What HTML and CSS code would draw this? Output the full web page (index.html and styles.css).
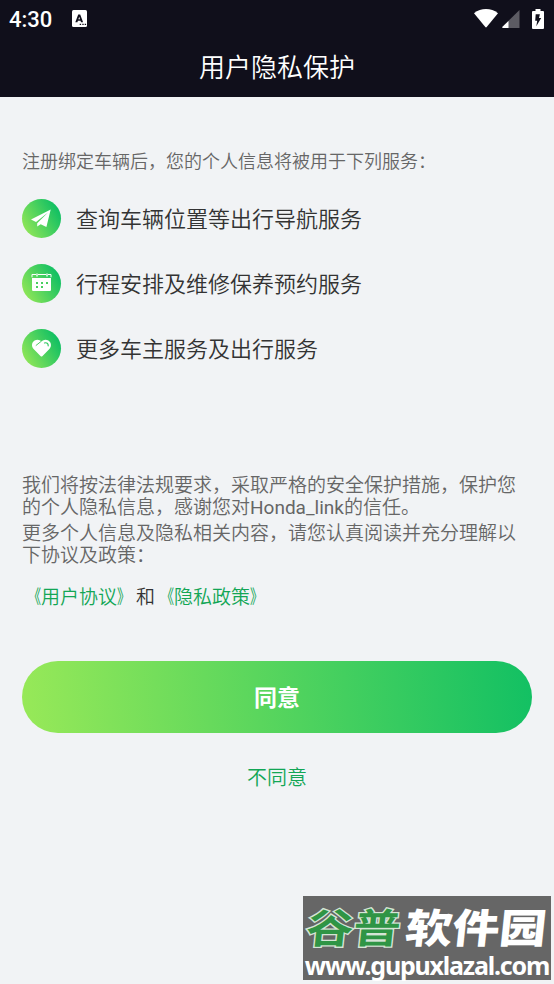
FILE: index.html
```html
<!DOCTYPE html>
<html lang="zh-CN">
<head>
    <meta charset="UTF-8">
    <meta name="viewport" content="width=device-width, initial-scale=1.0">
    <title>用户隐私保护</title>
    <link rel="stylesheet" href="styles.css">
</head>
<body>
    <header class="header">
        <div class="status-bar">
            <span class="time">4:30</span>
            <svg class="app-icon" width="15" height="17" viewBox="0 0 15 17">
                <rect width="15" height="17" rx="1.5" fill="#fff"/>
                <path d="M3.300 12.200 6.200 4.500h2L11.100 12.200H9L8.500 10.800H5.900L5.400 12.200ZM6.400 9.200H8L7.200 6.700Z" fill="#100f1b" fill-rule="evenodd"/>
                <path d="M7.700 14.300h1.400M10.300 14.300h1.400M12.700 14.300h1.400" stroke="#100f1b" stroke-width="1.300"/>
            </svg>
            <div class="status-icons">
                <svg width="24" height="19" viewBox="0 0 24 19">
                    <path d="M0 4.200C7-1.400 17-1.400 24 4.200L12.700 18q-.700.800-1.400 0Z" fill="#fff"/>
                </svg>
                <svg class="signal" width="18" height="18" viewBox="0 0 18 18">
                    <path d="M17.500 0v18H1q-1.200-.600-.500-1.300Z" fill="#5c5b63"/>
                    <path d="M6.500 11v7H1q-1.200-.600-.500-1.300Z" fill="#fff"/>
                </svg>
                <svg class="battery" width="12" height="20" viewBox="0 0 12 20">
                    <path d="M3.500 0h5v2H11q1 0 1 1v16q0 1-1 1H1q-1 0-1-1V3q0-1 1-1h2.500Z" fill="#fff"/>
                    <path d="M3.700 5.300h4.200L7 9.100h2.200L4.300 17.300 5.200 11.700H3.200Z" fill="#100f1b"/>
                </svg>
            </div>
        </div>
        <h1>用户隐私保护</h1>
    </header>

    <main class="content">
        <p class="intro">注册绑定车辆后，您的个人信息将被用于下列服务：</p>

        <ul class="services">
            <li>
                <span class="icon">
                    <svg width="39" height="39" viewBox="0 0 39 39">
                        <path d="M28.700 10.600 9 20.400l5 2.600L26 13.500 15.200 24.200v3.200l3.500-2.200 5.700 2.800Z" fill="#fff"/>
                    </svg>
                </span>
                <span class="label">查询车辆位置等出行导航服务</span>
            </li>
            <li>
                <span class="icon">
                    <svg width="39" height="39" viewBox="0 0 39 39">
                        <path d="M10 13.300v-2.800h4M16 10.500h8M26 10.500h3v2.800" fill="none" stroke="#fff" stroke-width="1"/>
                        <path d="M15 9.500v3M25 9.500v3" stroke="#fff" stroke-width="1.300"/>
                        <path d="M10 14h19v11.700q0 1.300-1.300 1.300H11.300Q10 27 10 25.700Z" fill="#fff"/>
                        <path d="M14 18h2v2h-2zM19 18h2v2h-2zM24 18h2v2h-2zM14 22h2v2h-2zM19 22h2v2h-2z" fill="#48cf5f"/>
                    </svg>
                </span>
                <span class="label">行程安排及维修保养预约服务</span>
            </li>
            <li>
                <span class="icon">
                    <svg width="39" height="39" viewBox="0 0 39 39">
                        <path d="M19.500 12.300Q22 10.200 25 11c4.200 1.200 5.200 6 2.400 9L20.300 27.200q-.800.700-1.600 0L11.600 20C8.800 17 9.800 12.200 14 11q3-.800 5.500 1.300Z" fill="#fff"/>
                        <path d="M13.800 16.600 19.600 12" stroke="#4bcf5f" stroke-width="1" fill="none"/>
                        <path d="M22.500 14c2.200-.800 3.800.600 3.700 2.800" stroke="#31c962" stroke-width="1.200" fill="none" stroke-linecap="round"/>
                    </svg>
                </span>
                <span class="label">更多车主服务及出行服务</span>
            </li>
        </ul>

        <div class="terms">
            <p>我们将按法律法规要求，采取严格的安全保护措施，保护您的个人隐私信息，感谢您对<span class="latin">Honda_link</span>的信任。</p>
            <p>更多个人信息及隐私相关内容，请您认真阅读并充分理解以下协议及政策：</p>
        </div>
        <p class="links"><a href="#"><span class="open">《</span>用户协议<span class="close">》</span></a>和<a href="#"><span class="open">《</span>隐私政策<span class="close">》</span></a></p>

        <button class="agree">同意</button>
        <button class="disagree">不同意</button>
    </main>

    <div class="watermark">
        <div class="site-name"><span class="green">谷普</span><span>软件园</span></div>
        <div class="site-url">www.gupuxlazal.com</div>
    </div>
</body>
</html>
```

FILE: styles.css
```css
* {
    box-sizing: border-box;
}
body {
    font-family: Roboto, "Noto Sans CJK SC", sans-serif;
    font-weight: 350;
    background: #f1f3f5;
    color: #333;
    margin: 0;
    height: 984px;
    position: relative;
    overflow: hidden;
}
p, h1, ul {
    margin: 0;
    padding: 0;
}
.header {
    height: 97px;
    background: #100f1b;
    color: #fff;
}
.status-bar {
    display: flex;
    align-items: center;
    height: 37px;
    padding: 0 10px 0 9px;
}
.time {
    width: 63px;
    font-size: 22px;
    font-weight: 500;
    line-height: 37px;
    padding-top: 1px;
}
.status-icons {
    display: flex;
    align-items: center;
    margin-left: auto;
}
.signal {
    margin-left: 4px;
}
.battery {
    margin-left: 12px;
}
h1 {
    font-size: 26px;
    font-weight: 350;
    line-height: 62px;
    text-align: center;
}
.content {
    padding: 51px 22px 0;
}
.intro {
    color: #666;
    font-size: 18px;
    line-height: 28px;
}
.services {
    list-style: none;
    margin-top: 23px;
}
.services li {
    display: flex;
    align-items: center;
    height: 39px;
    margin-bottom: 26px;
    font-size: 22px;
}
.label {
    padding-bottom: 4px;
}
.icon {
    width: 39px;
    height: 39px;
    margin-right: 15px;
    border-radius: 50%;
    background: linear-gradient(60deg, #9ae956 5%, #12c063 85%);
}
.icon svg {
    display: block;
}
.terms {
    margin-top: 107px;
    color: #666;
    font-size: 19px;
    line-height: 22px;
}
.terms p + p {
    margin-top: 4px;
}
.latin {
    font-weight: 400;
}
.links {
    margin-top: 17px;
    font-size: 19px;
    line-height: 28px;
}
.links a {
    color: #13a655;
    text-decoration: none;
}
.open, .close {
    display: inline-block;
    font-weight: 400;
    transform: scaleX(0.7);
}
.open {
    transform-origin: right;
}
.close {
    transform-origin: left;
}
button {
    display: block;
    border: none;
    font-family: inherit;
    font-weight: 350;
    cursor: pointer;
}
.agree {
    width: 100%;
    height: 72px;
    margin-top: 49px;
    padding: 0 0 3px;
    border-radius: 36px;
    background: linear-gradient(84deg, #98e958, #12c063);
    color: #fff;
    font-size: 23px;
    font-weight: 700;
}
.disagree {
    margin: 29px auto 0;
    padding: 0;
    background: none;
    color: #13a655;
    font-size: 20px;
    line-height: 32px;
}
/* site mark in the bottom corner */
.watermark {
    position: absolute;
    right: 3px;
    bottom: 4px;
    width: 248px;
    height: 84px;
    background: #666;
    color: #fff;
    white-space: nowrap;
}
.site-name {
    display: flex;
    gap: 5px;
    height: 55px;
    padding-left: 4px;
    font-size: 47px;
    font-weight: 900;
    line-height: 68px;
    transform: skewX(-6deg) scaleY(0.86);
}
.site-name .green {
    color: #2f9545;
    font-weight: 700;
    -webkit-text-stroke: 3px #d5e5d6;
    paint-order: stroke fill;
}
.site-url {
    font-family: "Noto Sans", sans-serif;
    font-size: 25px;
    font-weight: 700;
    letter-spacing: -1.2px;
    line-height: 28px;
    text-align: center;
}
```
